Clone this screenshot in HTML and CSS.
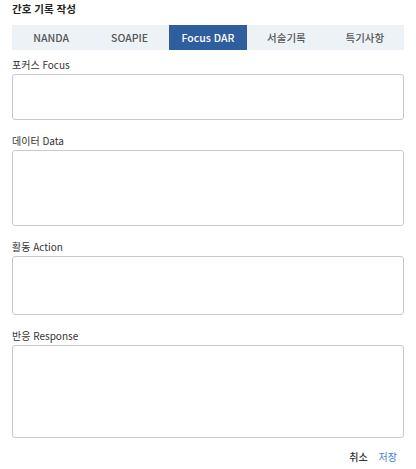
FILE: index.html
```html
<!DOCTYPE html>
<html lang="ko">

<head>
    <meta charset="UTF-8">
    <meta name="viewport" content="width=device-width, initial-scale=1.0">
    <title>간호 기록 작성</title>
    <link rel="stylesheet" href="styles.css">
</head>

<body>
    <div class="container">
        <h1 class="title">간호 기록 작성</h1>

        <div class="tabs">
            <button class="tab">NANDA</button>
            <button class="tab">SOAPIE</button>
            <button class="tab active">Focus DAR</button>
            <button class="tab">서술기록</button>
            <button class="tab">특기사항</button>
        </div>

        <div class="form">
            <div class="field">
                <label for="focus">포커스 Focus</label>
                <textarea id="focus" class="box-focus"></textarea>
            </div>
            <div class="field">
                <label for="data">데이터 Data</label>
                <textarea id="data" class="box-data"></textarea>
            </div>
            <div class="field">
                <label for="action">활동 Action</label>
                <textarea id="action" class="box-action"></textarea>
            </div>
            <div class="field">
                <label for="response">반응 Response</label>
                <textarea id="response" class="box-response"></textarea>
            </div>
        </div>

        <div class="actions">
            <button class="btn-cancel">취소</button>
            <button class="btn-save">저장</button>
        </div>
    </div>
</body>

</html>
```

FILE: styles.css
```css
body {
    margin: 0;
    background-color: #ffffff;
    color: #222;
    font-family: "Noto Sans CJK KR", "Noto Sans", sans-serif;
}

.container {
    padding: 0 12px;
}

.title {
    margin: 0;
    padding-top: 1px;
    font-size: 10.5px;
    font-weight: 700;
    line-height: 15px;
    color: #222;
}

.tabs {
    display: flex;
    margin-top: 9px;
    height: 25px;
    background-color: #edf2f7;
}

.tab {
    flex: 1;
    border: none;
    margin: 0;
    padding: 0;
    background: none;
    font-family: inherit;
    font-size: 10.5px;
    font-weight: 500;
    color: #555;
    cursor: pointer;
}

.tab.active {
    background-color: #2f5e9e;
    color: #ffffff;
}

.form {
    display: flex;
    flex-direction: column;
    gap: 14px;
    margin-top: 8px;
}

.field {
    display: flex;
    flex-direction: column;
}

.field label {
    font-size: 10px;
    line-height: 13px;
    color: #333;
    margin-bottom: 3px;
}

.field textarea {
    box-sizing: border-box;
    width: 100%;
    border: 1px solid #c9c9c9;
    border-radius: 3px;
    resize: none;
    font-family: inherit;
    font-size: 10px;
    padding: 4px 6px;
}

.box-focus {
    height: 46px;
}

.box-data {
    height: 76px;
}

.box-action {
    height: 59px;
}

.box-response {
    height: 93px;
}

.actions {
    display: flex;
    justify-content: flex-end;
    gap: 11px;
    margin-top: 12px;
    padding-right: 7px;
}

.actions button {
    border: none;
    background: none;
    padding: 0;
    font-family: inherit;
    font-size: 10px;
    line-height: 13px;
    cursor: pointer;
}

.btn-cancel {
    color: #333;
    font-weight: 500;
}

.btn-save {
    color: #3b7fcf;
}
```
